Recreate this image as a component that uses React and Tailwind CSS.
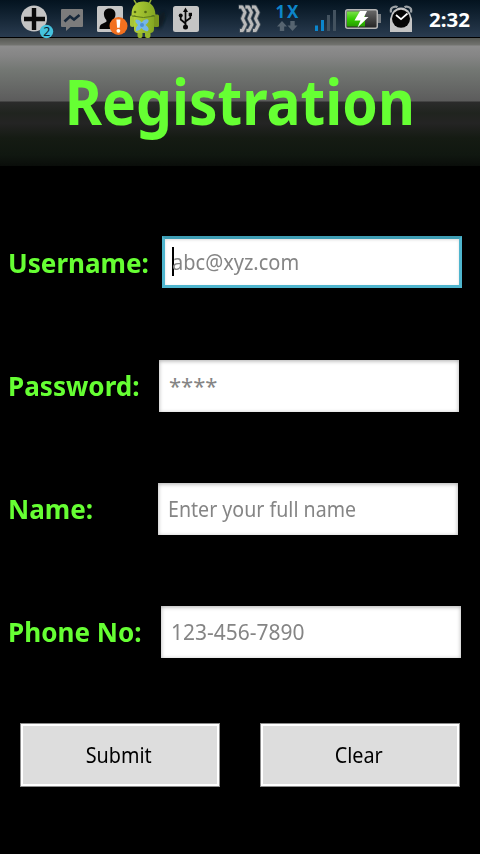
const noto = "font-['Noto_Sans','Open_Sans',sans-serif]";

function Icon({ x, w, className = "", children }) {
  return (
    <svg className={`h-[38px] shrink-0 overflow-visible ${className}`} width={w} height="38" viewBox={`${x} 0 ${w} 38`}>
      {children}
    </svg>
  );
}

function StatusBar() {
  return (
    <div className="flex h-[38px] items-start border-b border-black bg-linear-to-b from-[#04131f] to-[#2a3c50]">
      <Icon x={20} w={36} className="ml-5">
        <circle cx="34" cy="18.5" r="13" fill="#c4c4c4" />
        <path d="M34 8v22M24 19h21" stroke="#0a0a0a" strokeWidth="4.4" />
        <circle cx="46.5" cy="31.5" r="6.7" fill="#45c3de" />
        <text x="46.8" y="36" textAnchor="middle" fontSize="12.5" fontFamily="Noto Sans" fill="#082230">2</text>
      </Icon>
      <Icon x={60} w={24} className="ml-1">
        <path d="M62 9h20q1 0 1 1v16q0 1-1 1H70.500l-4.500 4V27h-4q-1 0-1-1V10q0-1 1-1z" fill="#7c7c7c" />
        <path d="M64.500 21.500l5.500-5 4 3 5.500-4.500" fill="none" stroke="#17283a" strokeWidth="2.600" />
      </Icon>
      <Icon x={96} w={33} className="ml-3">
        <rect x="97" y="6" width="26" height="26" rx="1.500" fill="#c6c6c6" />
        <path d="M109.500 8.500c-4 0-6 2.500-5.500 6.500.2 2.300 1.200 3.600 2.400 5v1.800l-5.400 2.600c-1 .6-1.500 2.600-1.500 4.600H120V25l-7-3.200V20c1.300-1.400 2.200-2.800 2.400-5 .4-4-1.900-6.500-5.900-6.500z" fill="#050505" />
        <circle cx="118.500" cy="26" r="9" fill="#f2701f" />
        <path d="M116.400 19.500h4l-.7 8.200h-2.600z" fill="#fff" />
        <circle cx="118.400" cy="30.800" r="1.900" fill="#fff" />
      </Icon>
      <Icon x={129} w={40}>
        <defs>
          <linearGradient id="droid" x1="0" x2="1"><stop offset="0" stopColor="#b3d039" /><stop offset="1" stopColor="#84a722" /></linearGradient>
          <filter id="soft"><feGaussianBlur stdDeviation="1.500" /></filter>
        </defs>
        <ellipse cx="161" cy="20" rx="4" ry="9" fill="#07121c" opacity=".7" filter="url(#soft)" transform="rotate(20 161 20)" />
        <path d="M134 0l2.500 4M151 0l-2 4" stroke="#94ad36" strokeWidth="1.500" />
        <rect x="130" y="15" width="5" height="12" rx="2.500" fill="#a7c53a" />
        <rect x="153.500" y="14.500" width="5.500" height="12.500" rx="1.500" fill="#7a961e" />
        <rect x="137.500" y="29" width="5" height="9" rx="2" fill="#98b82a" />
        <rect x="145" y="29" width="5.500" height="9" rx="2" fill="#98b82a" />
        <path d="M134 16h20v13q0 4-4 4h-12q-4 0-4-4z" fill="url(#droid)" />
        <path d="M131.500 15c0-9 4-13.500 12-13.500 7 0 11.500 4.500 12 13.500q-12 3-24 0z" fill="url(#droid)" />
        <path d="M132 16q11.500 3 23 0" fill="none" stroke="#5d7a18" strokeWidth="1" />
        <circle cx="135" cy="12" r="1.300" fill="#526a14" /><circle cx="145.500" cy="12" r="1.300" fill="#526a14" />
        <path d="M136 19.500q4 0 5.500 3 3-4 6.500-3 2 2-2.500 5.500 4.500 3 2.500 6-4 1-6.500-3-2.500 3.500-5.500 3-1-3 2-6-4-3.500-2-5.500z" fill="#75b6e8" />
        <circle cx="142" cy="25" r="2" fill="#4b8fd4" />
      </Icon>
      <Icon x={172} w={28} className="ml-[3px]">
        <rect x="173" y="6" width="26" height="26" rx="2.500" fill="#c5c5c5" />
        <path d="M185.500 11v15M185.500 23.500l-4.800-4v-4M185.500 21.500l4.800-3.500v-3.500" fill="none" stroke="#080808" strokeWidth="1.700" />
        <path d="M185.500 7.500l2.500 4.500h-5z" fill="#080808" />
        <circle cx="185.500" cy="27" r="2.500" fill="#080808" /><circle cx="180.700" cy="15.500" r="2" fill="#080808" />
        <rect x="188.700" y="12.800" width="3.300" height="3.300" fill="#080808" />
      </Icon>
      <Icon x={236} w={28} className="ml-9">
        <g fill="none" strokeLinejoin="round">
          <path d="M238.500 7h3.500l3 5.500-2.500 6 3 6-3 6h-3M245 7h3.500l3 5.500-2.500 6 3 6-3 6h-3M251.500 7h3.500l3 5.500-2.500 6 3 6-3 6h-3" stroke="#4a5660" strokeWidth="4.600" />
          <path d="M239 7h3l3 5.500-2.500 6 3 6-3 6h-2.500M245.500 7h3l3 5.500-2.500 6 3 6-3 6h-2.500M252 7h3l3 5.500-2.500 6 3 6-3 6h-2.500" stroke="#bababa" strokeWidth="2.800" />
        </g>
      </Icon>
      <Icon x={274} w={28} className="ml-[10px]">
        <text x="275.500" y="18" textLength="23" lengthAdjust="spacing" fontSize="17" fontWeight="700" fontFamily="Noto Sans" fill="#0d85c9">1X</text>
        <path d="M282 21l5 5.500h-2.800v4.500h-4.400v-4.500H277z M292.500 31l5-5.500h-2.800V21h-4.400v4.500h-2.800z" fill="#566470" />
      </Icon>
      <Icon x={314} w={24} className="ml-3">
        <path d="M315 25.500h3V31h-3z M321 20h3v11h-3z" fill="#0b86cd" />
        <path d="M327 15h3v16h-3z M333 10h3v21h-3z" fill="#43525f" />
      </Icon>
      <Icon x={344} w={38} className="ml-[6px]">
        <defs>
          <linearGradient id="charge" x2="0" y2="1"><stop stopColor="#7be04a" /><stop offset=".5" stopColor="#35cc00" /><stop offset="1" stopColor="#279c00" /></linearGradient>
          <linearGradient id="cell" x2="0" y2="1"><stop stopColor="#6b6b6b" /><stop offset="1" stopColor="#222" /></linearGradient>
        </defs>
        <path d="M377 14h4v9h-4z" fill="#777d82" />
        <rect x="345.700" y="9.700" width="31.600" height="18.600" rx="2" fill="url(#cell)" stroke="#b5b5b5" strokeWidth="1.500" />
        <rect x="347" y="11.500" width="18" height="15" fill="url(#charge)" />
        <path d="M360 11l7 0-3 6h4.500l-11 10.500 3-7h-6z" fill="#fff" />
      </Icon>
      <Icon x={388} w={26} className="ml-[6px]">
        <path d="M391 12.500q-1-4.500 2.500-5.500 2.500-.8 4 .2M411 12.500q1-4.500-2.500-5.500-2.500-.8-4 .2" fill="none" stroke="#9da2a6" strokeWidth="2.200" />
        <path d="M390 32V19l2-6q3.500-5.500 9-5.500t9 5.500l2 6v13z" fill="#c4c4c4" />
        <circle cx="401" cy="18.800" r="9" fill="#050505" />
        <path d="M396 15l5 4.200 6.500-5.700" fill="none" stroke="#fff" strokeWidth="1.700" />
      </Icon>
      <svg className={`ml-[14px] ${noto}`} width="46" height="37">
        <text x="1" y="27" textLength="41" lengthAdjust="spacingAndGlyphs" fontSize="20" fontWeight="700" fill="#fff">2:32</text>
      </svg>
    </div>
  );
}

function Field({ label, labelClass, placeholder, textClass, inputClass, focused }) {
  return (
    <div className="flex h-[52px] items-center pl-2">
      <label className={`shrink-0 pt-[2px] whitespace-nowrap text-[27px] leading-[36px] font-bold text-[#66ff33] ${labelClass}`}>
        <span className="inline-block origin-left scale-x-[0.966]">{label}</span>
      </label>
      <div className={`flex h-[52px] w-[300px] shrink-0 items-center bg-white ${inputClass} ${focused ? "border-[3px] border-[#4fb5ce] border-t-[#3e9db4] pl-[7px] shadow-[inset_0_1px_3px_#ddd]" : "pl-[10px] shadow-[inset_0_1px_4px_#aaa]"}`}>
        {focused && <span className="-mr-0.5 mb-[2px] h-[29px] w-0.5 bg-black" />}
        <span className={`origin-left whitespace-nowrap pb-[2px] text-[22px] leading-[30px] text-[#858585] ${textClass}`}>{placeholder}</span>
      </div>
    </div>
  );
}

function Button({ children }) {
  return (
    <button className="h-16 w-[200px] border border-[#8c8c8c] bg-white p-0.5 text-[22px] text-black">
      <span className="flex h-full items-center justify-center bg-[#dddddd] pr-[2px] pb-[2px]">
        <span className="scale-x-[0.9]">{children}</span>
      </span>
    </button>
  );
}

export default function App() {
  return (
    <div className={`h-[854px] w-[480px] overflow-hidden bg-black ${noto}`}>
      <StatusBar />
      <header className="flex h-32 justify-center bg-[linear-gradient(to_bottom,#565853_0px,#72736f_7px,#8d8d8d_8px,#858585_18px,#737773_32px,#5c5c5c_63px,#2b2b2b_64px,#20241f_75px,#242424_85px,#151b13_100px,#101710_117px,#0a0d0a_128px)]">
        <h1 className="origin-center scale-x-[0.918] whitespace-nowrap text-[62px] leading-[126px] font-bold text-[#66ff33]">Registration</h1>
      </header>
      <main className="flex flex-col pt-[70px]">
        <div className="flex flex-col gap-[71px]">
          <Field label="Username:" labelClass="w-[154px]" placeholder="abc@xyz.com" textClass="scale-x-[0.91]" focused />
          <Field label="Password:" labelClass="w-[151px]" inputClass="mt-[2px]" placeholder="****" />
          <Field label="Name:" labelClass="w-[150px]" inputClass="mt-[2px]" placeholder="Enter your full name" textClass="scale-x-[0.891]" />
          <Field label="Phone No:" labelClass="w-[153px]" inputClass="mt-[2px]" placeholder="123-456-7890" textClass="scale-x-[0.953]" />
        </div>
        <div className="mt-[66px] flex gap-10 px-5">
          <Button>Submit</Button>
          <Button>Clear</Button>
        </div>
      </main>
    </div>
  );
}
